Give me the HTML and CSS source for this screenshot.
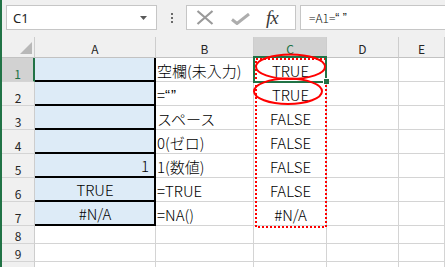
FILE: index.html
```html
<!DOCTYPE html>
<html lang="ja">
<head>
<meta charset="UTF-8">
<title>ISBLANK - sheet</title>
<link rel="stylesheet" href="styles.css">
</head>
<body>
<div class="window">
  <div class="fbar">
    <div class="namebox">
      <span>C1</span>
      <svg class="dd" width="7" height="4" viewBox="0 0 7 4"><path d="M0 0H7L3.5 4Z" fill="#595959"/></svg>
    </div>
    <div class="grip"><i></i><i></i><i></i></div>
    <div class="btns">
      <svg class="ic-x" width="18" height="15" viewBox="0 0 18 15"><path d="M1.5 1L16.5 14M16.5 1L1.5 14" stroke="#9a9a9a" stroke-width="2.2" fill="none"/></svg>
      <svg class="ic-ok" width="19" height="12" viewBox="0 0 19 12"><path d="M1 6.5L6 10.5L18 1" stroke="#adadad" stroke-width="3" fill="none"/></svg>
      <span class="fx">fx</span>
    </div>
    <div class="formula">=A1=<span class="q">“ ”</span></div>
  </div>

  <div class="sheet">
    <div class="corner"><svg width="12" height="12" viewBox="0 0 12 12"><path d="M12 0V12H0Z" fill="#b8b8b8"/></svg></div>
    <div class="ch">A</div>
    <div class="ch">B</div>
    <div class="ch sel">C</div>
    <div class="ch">D</div>
    <div class="ch">E</div>

    <div class="rh sel">1</div>
    <div class="c a"></div>
    <div class="c">空欄(未入力)</div>
    <div class="c ctr">TRUE</div>
    <div class="c"></div>
    <div class="c"></div>

    <div class="rh">2</div>
    <div class="c a"></div>
    <div class="c">=<span class="q sp">“”</span></div>
    <div class="c ctr">TRUE</div>
    <div class="c"></div>
    <div class="c"></div>

    <div class="rh">3</div>
    <div class="c a"></div>
    <div class="c">スペース</div>
    <div class="c ctr">FALSE</div>
    <div class="c"></div>
    <div class="c"></div>

    <div class="rh">4</div>
    <div class="c a"></div>
    <div class="c">0(ゼロ)</div>
    <div class="c ctr">FALSE</div>
    <div class="c"></div>
    <div class="c"></div>

    <div class="rh">5</div>
    <div class="c a num">1</div>
    <div class="c">1(数値)</div>
    <div class="c ctr">FALSE</div>
    <div class="c"></div>
    <div class="c"></div>

    <div class="rh">6</div>
    <div class="c a ctr">TRUE</div>
    <div class="c">=TRUE</div>
    <div class="c ctr">FALSE</div>
    <div class="c"></div>
    <div class="c"></div>

    <div class="rh">7</div>
    <div class="c a ctr">#N/A</div>
    <div class="c">=NA()</div>
    <div class="c ctr">#N/A</div>
    <div class="c"></div>
    <div class="c"></div>

    <div class="rh">8</div>
    <div class="c"></div><div class="c"></div><div class="c"></div><div class="c"></div><div class="c"></div>
    <div class="rh">9</div>
    <div class="c"></div><div class="c"></div><div class="c"></div><div class="c"></div><div class="c"></div>
    <div class="rh"></div>
    <div class="c"></div><div class="c"></div><div class="c"></div><div class="c"></div><div class="c"></div>
  </div>

  <!-- selection, copy marquee and the hand-drawn circles -->
  <svg class="marks" width="445" height="267" viewBox="0 0 445 267">
    <rect x="256" y="59" width="70" height="168" fill="none" stroke="#ff0000" stroke-width="2" stroke-dasharray="2 2"/>
    <rect x="254" y="57" width="72" height="25" fill="none" stroke="#217346" stroke-width="2"/>
    <rect x="323" y="78" width="6" height="6" fill="#fff"/>
    <rect x="324" y="79" width="5" height="5" fill="#217346"/>
    <ellipse cx="290.5" cy="66.7" rx="34.5" ry="12.3" fill="none" stroke="#ff0000" stroke-width="2"/>
    <ellipse cx="288" cy="91.3" rx="34" ry="12.7" fill="none" stroke="#ff0000" stroke-width="2"/>
  </svg>
</div>
</body>
</html>
```

FILE: styles.css
```css
body {
  margin: 0;
  font-family: "Noto Sans CJK JP", sans-serif;
}

.window {
  position: relative;
  width: 445px;
  height: 267px;
  overflow: hidden;
  background: #fff;
  border-left: 2px solid #217346;
  box-sizing: border-box;
}

/* formula bar */
.fbar {
  height: 37px;
  background: #f0f0f0;
  display: flex;
  align-items: flex-start;
  padding: 5px 0 0 4px;
  box-sizing: border-box;
}

.namebox {
  width: 151px;
  height: 25px;
  box-sizing: border-box;
  background: #fff;
  border: 1px solid #c6c6c6;
  display: flex;
  align-items: center;
  justify-content: space-between;
  padding: 0 9px 0 6px;
  font: 13px "Noto Sans", sans-serif;
  color: #222;
}

.grip {
  width: 29px;
  height: 25px;
  display: flex;
  flex-direction: column;
  align-items: center;
  justify-content: center;
  gap: 2px;
}

.grip i {
  display: block;
  width: 2px;
  height: 2px;
  background: #6a6a6a;
}

.btns {
  width: 110px;
  height: 25px;
  box-sizing: border-box;
  background: #fff;
  border: 1px solid #c6c6c6;
  display: flex;
  align-items: center;
  padding-left: 9px;
}

.ic-x { margin-right: 17px; }
.ic-ok { margin-right: 16px; margin-top: 2px; }

.fx {
  font: italic 19px "Liberation Serif", serif;
  color: #3a3a3a;
  letter-spacing: -1px;
}

.formula {
  flex: 1;
  height: 25px;
  box-sizing: border-box;
  margin-left: 4px;
  margin-right: -2px;
  background: #fff;
  border: 1px solid #c6c6c6;
  display: flex;
  align-items: center;
  padding-left: 8px;
  font-size: 12px;
  font-weight: 300;
  color: #111;
}

.q {
  font-family: "Liberation Sans", sans-serif;
}

.q.sp { letter-spacing: 1px; }

/* sheet grid */
.sheet {
  display: grid;
  grid-template-columns: 33px 121px 98px 73px 72px 1fr;
  grid-template-rows: 21px repeat(7, 24px) repeat(3, 18px);
}

.corner,
.ch,
.rh {
  background: #f0f0f0;
  box-sizing: border-box;
  border-right: 1px solid #cdcdcd;
  border-bottom: 1px solid #c2c2c2;
  color: #262626;
  font-size: 12px;
}

.corner {
  display: flex;
  justify-content: flex-end;
  align-items: flex-end;
  padding: 0 2px 3px 0;
}

.ch {
  display: flex;
  align-items: center;
  justify-content: center;
  padding-top: 2px;
}

.rh {
  display: flex;
  align-items: flex-end;
  justify-content: center;
  line-height: 14px;
  border-bottom-color: #d4d4d4;
}

.ch.sel,
.rh.sel {
  background: #d2d2d2;
  color: #217346;
}

.rh.sel {
  border-right: 2px solid #217346;
}

.c {
  box-sizing: border-box;
  border-right: 1px solid #d4d4d4;
  border-bottom: 1px solid #d4d4d4;
  display: flex;
  align-items: flex-end;
  padding: 0 0 1px 1px;
  font-size: 15px;
  font-weight: 300;
  line-height: 18px;
  color: #000;
  white-space: nowrap;
}

.c.a {
  background: #ddebf7;
  border-right: 2px solid #000;
  border-bottom: 2px solid #000;
}

.ctr { justify-content: center; }

.num {
  justify-content: flex-end;
  padding-right: 5px;
}

.marks {
  position: absolute;
  top: 0;
  left: -2px;
  pointer-events: none;
}
```
